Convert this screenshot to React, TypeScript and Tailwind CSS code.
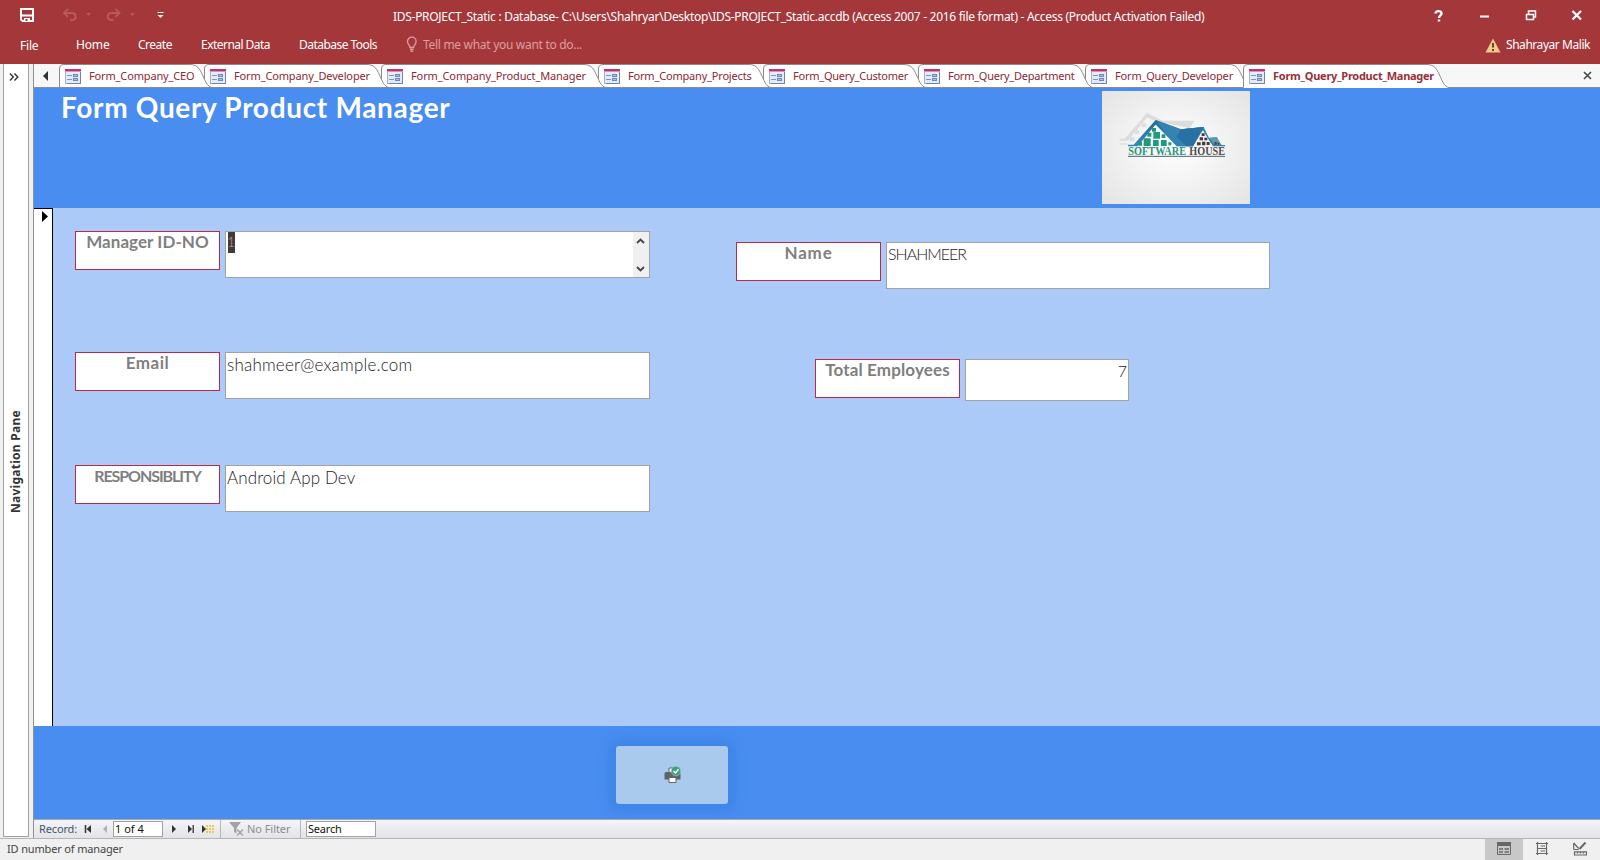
import type { ReactNode } from "react";

type Tab = { label: string; width: number; box: string; spacing: string; z: string; active?: boolean };

const tabs: Tab[] = [
  { label: "Form_Company_CEO", width: 145, box: "w-[145px]", spacing: "tracking-[-0.147px]", z: "z-[8]" },
  { label: "Form_Company_Developer", width: 177, box: "w-[177px]", spacing: "tracking-[-0.137px]", z: "z-[7]" },
  { label: "Form_Company_Product_Manager", width: 217, box: "w-[217px]", spacing: "tracking-[-0.113px]", z: "z-[6]" },
  { label: "Form_Company_Projects", width: 165, box: "w-[165px]", spacing: "tracking-[-0.185px]", z: "z-[5]" },
  { label: "Form_Query_Customer", width: 155, box: "w-[155px]", spacing: "tracking-[-0.231px]", z: "z-[4]" },
  { label: "Form_Query_Department", width: 167, box: "w-[167px]", spacing: "tracking-[-0.245px]", z: "z-[3]" },
  { label: "Form_Query_Developer", width: 158, box: "w-[158px]", spacing: "tracking-[-0.176px]", z: "z-[2]" },
  { label: "Form_Query_Product_Manager", width: 198, box: "w-[198px]", spacing: "tracking-[-0.263px]", z: "z-[9]", active: true },
];

function FormIcon() {
  return (
    <svg width="16" height="15" viewBox="0 0 16 15" className="shrink-0">
      <rect x="0.5" y="0.5" width="15" height="14" fill="#e3ebf8" stroke="#a3b0ca" />
      <rect x="0" y="0" width="16" height="2" fill="#b8386b" />
      <rect x="0" y="2" width="16" height="1" fill="#e08fb0" />
      <path d="M2 6.500h5M2 10.500h5" stroke="#8593b3" />
      <rect x="8.500" y="5.500" width="4" height="2" fill="#a9bfe6" stroke="#6f88bb" />
      <rect x="8.500" y="9.500" width="4" height="2" fill="#a9bfe6" stroke="#6f88bb" />
      <path d="M15.500 3v11.500H2" stroke="#6f83a6" fill="none" />
    </svg>
  );
}

function TabItem({ tab }: { tab: Tab }) {
  const w = tab.width;
  const outline = `M0.5 23.5V5Q0.5 0.5 5 0.5H${w - 14}C${w - 6} 0.5 ${w - 4} 6 ${w - 2} 10C${w + 1} 16 ${w + 3} 23 ${w + 8} 23.5`;
  return (
    <div className={`relative flex h-6 shrink-0 items-center ${tab.box} ${tab.z}`}>
      <svg className="absolute left-0 top-0" width={w + 9} height="24">
        <path d={outline + "V24H0.5Z"} fill="#fff" />
        <path d={outline} fill="none" stroke="#8c8c8c" />
        {!tab.active && <path d={`M0 23.5H${w + 9}`} stroke="#8c8c8c" />}
      </svg>
      <div className="relative flex items-center pl-[6px]">
        <FormIcon />
        <span
          className={`ml-2 whitespace-nowrap text-[11px] leading-[22px] ${tab.spacing} ${tab.active ? "font-bold text-[#98303a]" : "text-[#8e2833]"}`}
        >
          {tab.label}
        </span>
      </div>
    </div>
  );
}

function Label({ children, className }: { children: ReactNode; className: string }) {
  return (
    <div className={`h-[39px] w-[145px] shrink-0 whitespace-nowrap border border-[#ba2a48] bg-white text-center font-[Lato,sans-serif] font-bold leading-5 text-[#7f7f7f] ${className}`}>
      {children}
    </div>
  );
}

function Field({ children, className }: { children: ReactNode; className: string }) {
  return (
    <div className={`shrink-0 whitespace-nowrap border border-[#9fa3a8] bg-white px-px font-[Lato,sans-serif] font-light leading-5 text-[#222] ${className}`}>
      {children}
    </div>
  );
}

function Logo() {
  return (
    <svg width="148" height="113" viewBox="67 33 444 339" preserveAspectRatio="none">
      <defs>
        <radialGradient id="paper" cx="0.5" cy="0.5" r="0.7">
          <stop offset="0" stopColor="#fff" />
          <stop offset="0.45" stopColor="#f3f3f3" />
          <stop offset="1" stopColor="#e4e4e4" />
        </radialGradient>
        <linearGradient id="roof" x1="0" y1="0" x2="1" y2="1">
          <stop offset="0" stopColor="#1d5f90" />
          <stop offset="0.5" stopColor="#3587b9" />
          <stop offset="1" stopColor="#2f7fae" />
        </linearGradient>
      </defs>
      <rect x="67" y="33" width="444" height="339" fill="url(#paper)" />
      <path d="M120 176H135L202 99L250 122L345 122L330 145L225 122L202 112L145 182H120Z" fill="#dcdcdc" />
      <path d="M150 172h14v12h-14zM166 150h12v12h-12zM186 130h14v12h-14zM120 190h24v4h-24z" fill="#dedede" />
      <path d="M145 199H174L228 134L291 199H340L368 152L400 199H436V195H426L408 172L388 174L372 141L304 148L228 120L162 194H145Z" fill="url(#roof)" />
      <path d="M228 120L304 148L372 141L340 199H291Z" fill="#3383b5" />
      <path d="M304 148L291 170L320 199H340L372 141Z" fill="#2672a4" />
      <path d="M390 173L412 171L424 195H404Z" fill="#5b9aae" />
      <path d="M228 134L176 199H288Z" fill="#f4f8f6" />
      <path
        d="M217 144h12v11h-12zM203 158h12v12h-12zM221 156h20v20h-20zM246 163h11v11h-11zM192 175h21v23h-21zM220 180h17v18h-17zM244 180h17v18h-17zM176 186h11v11h-11zM266 187h9v9h-9z"
        fill="#1f9a80"
      />
      <path d="M370 151L346 198H398Z" fill="#efefef" />
      <path d="M366 160h9v8h-9zM360 172h10v9h-10zM374 173h9v8h-9zM352 187h11v9h-11zM367 185h10v11h-10zM381 186h9v9h-9zM405 186h6v8h-6zM414 188h5v6h-5z" fill="#4a3b3d" />
      <g transform="translate(0 224) scale(1 1.35)" className="font-['Liberation_Serif',serif] text-[27px] font-bold">
        <text x="146" y="0" textLength="173" lengthAdjust="spacingAndGlyphs" fill="#279580">
          SOFTWARE
        </text>
        <text x="329" y="0" textLength="107" lengthAdjust="spacingAndGlyphs" fill="#514a4c">
          HOUSE
        </text>
      </g>
      <path d="M145 229H436" stroke="#4d6460" strokeWidth="3" />
    </svg>
  );
}

function TitleBar() {
  return (
    <div className="flex h-8 items-center">
      <svg width="170" height="32" viewBox="0 0 170 32" fill="none" className="shrink-0">
        <path d="M21 9h12v12H22.500l-1.500-1.500z" stroke="#fff" strokeWidth="2" />
        <path d="M22 15.500h10" stroke="#fff" strokeWidth="2" />
        <path d="M24 18h6v4h-6z" fill="#fff" />
        <path d="M25.500 19h2v2h-2z" fill="#a4373a" />
        <g stroke="#b9595c" strokeWidth="2">
          <path d="M68 9l-4 4l4 4M64.500 13h7.500c5 0 5 7 0 7h-2" />
          <path d="M115.500 9l4 4l-4 4M119 13h-7.500c-5 0-5 7 0 7h2" />
        </g>
        <path d="M86 13h5l-2.500 3zM130 13h5l-2.500 3z" fill="#b9595c" />
        <path d="M157.500 12.500h6" stroke="#fff" />
        <path d="M157.500 15h6l-3 3z" fill="#fff" />
      </svg>
      <div className="ml-[223px] w-[820px] shrink-0 whitespace-nowrap pt-[2px] text-xs tracking-[-0.287px] text-white">
        IDS-PROJECT_Static : Database- C:\Users\Shahryar\Desktop\IDS-PROJECT_Static.accdb (Access 2007 - 2016 file
        format) - Access (Product Activation Failed)
      </div>
      <svg width="160" height="32" viewBox="1424 0 160 32" fill="none" className="ml-[211px] shrink-0" stroke="#fff" strokeWidth="2">
        <path d="M1435.500 13.500c0-3.200 6-3.200 6 0c0 2-2.500 1.800-2.500 4.500M1439 19.500v2" strokeWidth="2.400" />
        <path d="M1480 16.500h9" />
        <path d="M1526.500 14.500h7v5h-7z" strokeWidth="1.500" />
        <path d="M1528.500 14v-3h7v6h-2" strokeWidth="1.500" />
        <path d="M1572.500 11l8.500 8.500M1581 11l-8.500 8.500" strokeWidth="2.200" />
      </svg>
    </div>
  );
}

function Ribbon() {
  return (
    <div className="flex h-8 items-start whitespace-nowrap pl-5 pt-1 text-xs leading-[18px] text-white">
      <span className="w-14 pt-px tracking-[-0.222px]">File</span>
      <span className="w-[62px] tracking-[-0.16px]">Home</span>
      <span className="w-[63px] tracking-[-0.483px]">Create</span>
      <span className="w-[98px] tracking-[-0.538px]">External Data</span>
      <span className="w-[107px] tracking-[-0.536px]">Database Tools</span>
      <svg width="12" height="17" viewBox="0 0 12 17" fill="none" stroke="#dd9fa1" strokeWidth="1.300">
        <path d="M4 11.500C4 9 1.500 8.500 1.500 5.500a4.300 4.300 0 0 1 8.600 0C10.100 8.500 7.600 9 7.600 11.500zM4 13.500h3.600M4.500 15.300h2.600" />
      </svg>
      <span className="ml-[5px] tracking-[-0.3px] text-[#dd9fa1]">Tell me what you want to do...</span>
      <span className="ml-auto flex pr-[10px]">
        <svg width="16" height="15" viewBox="0 0 16 15" className="mr-[5px] mt-[2px]">
          <path d="M8 0.500L15.500 14.500H0.500Z" fill="#f3c88d" />
          <path d="M8 5v4.500M8 11v2" stroke="#5c4a26" strokeWidth="2" />
        </svg>
        <span className="tracking-[-0.45px]">Shahrayar Malik</span>
      </span>
    </div>
  );
}

function RecordBar() {
  return (
    <div className="flex h-[19px] items-center whitespace-nowrap border-t border-[#a5a8ac] bg-linear-to-b from-[#f5f5f7] to-[#e3e4e9] text-[11px] leading-4 text-[#44546a]">
      <span className="ml-[5px] w-[44px] tracking-[-0.145px]">Record:</span>
      <svg width="30" height="12" viewBox="0 0 30 12" className="shrink-0">
        <path d="M2.500 2v8" stroke="#333" strokeWidth="1.500" />
        <path d="M8 2v8L3.500 6z" fill="#333" />
        <path d="M24 2v8L20 6z" fill="#b0b0b0" />
      </svg>
      <span className="h-4 w-[50px] border border-[#a0a4aa] bg-white pl-px leading-[14px] text-[#111]">1 of 4</span>
      <svg width="57" height="14" viewBox="163 0 57 14" className="shrink-0">
        <path d="M172 3v8l4-4zM188 3v8l4-4zM202 3v8l4-4z" fill="#333" />
        <path d="M193.200 3v8" stroke="#333" strokeWidth="1.300" />
        <path d="M206 4h8M206 7h8M206 10h8" stroke="#ecc94b" strokeWidth="2" strokeDasharray="2 1" />
      </svg>
      <span className="h-full w-px bg-[#b4b7bd]" />
      <svg width="17" height="16" viewBox="0 0 17 16" className="ml-[7px] shrink-0">
        <path d="M1 1h12L8.500 7v5.500L6 11V7z" fill="#a3a3a5" />
        <path d="M9 8.500l6 6M15 8.500l-6 6" stroke="#a3a3a5" strokeWidth="1.500" />
      </svg>
      <span className="ml-[2px] w-[53px] tracking-[-0.053px] text-[#8c8c8c]">No Filter</span>
      <span className="h-full w-px bg-[#b4b7bd]" />
      <span className="ml-[5px] h-4 w-[70px] border border-[#a0a4aa] bg-white pl-px leading-[14px] tracking-[-0.202px] text-[#111]">
        Search
      </span>
    </div>
  );
}

function StatusBar() {
  return (
    <div className="flex h-[22px] shrink-0 items-stretch border-t border-[#b5b5b5] bg-[#f0f0f0] text-[11px] text-[#444]">
      <span className="pl-[7px] leading-[20px] tracking-[-0.155px]">ID number of manager</span>
      <div className="ml-auto flex">
        <div className="flex w-[38px] items-center justify-center bg-[#c8c8c8]">
          <svg width="14" height="13" viewBox="0 0 14 13" fill="none" stroke="#666" className="-mt-0.5">
            <path d="M0.500 0.500h13v12h-13z" />
            <path d="M0 0h14v4H0z" fill="#666" stroke="none" />
            <path d="M2 7h4M2 10h4M7.500 7h4.500M7.500 10h4.500" strokeWidth="1.500" />
          </svg>
        </div>
        <div className="flex w-[38px] items-center justify-center">
          <svg width="12" height="13" viewBox="0 0 12 13" fill="none" stroke="#666" strokeWidth="1.200" className="-mt-0.5">
            <path d="M0 1.500h12M0 11.500h12M1.500 0v13M10.500 0v13M1.500 6.500h9M4.500 4h4.500M4.500 9h4.500" />
          </svg>
        </div>
        <div className="flex w-[38px] items-center justify-center">
          <svg width="14" height="14" viewBox="0 0 14 14" fill="none" stroke="#666" strokeWidth="1.200" className="-mt-0.5">
            <path d="M0.700 1v6.500M0.700 1l5 5.500M0.700 7.500h5M1.500 9.800h12v3.200h-12zM4.500 10v1.500M7.500 10v1.500M10.500 10v1.500" />
            <path d="M12.500 0.500L6.500 7" strokeWidth="2" />
          </svg>
        </div>
        <div className="w-px" />
      </div>
    </div>
  );
}

export default function App() {
  return (
    <div className="flex h-[860px] w-[1600px] flex-col overflow-hidden bg-[#f0f0f0] font-['Noto_Sans',sans-serif]">
      <header className="h-16 shrink-0 bg-[#a4373a]">
        <TitleBar />
        <Ribbon />
      </header>

      <div className="flex min-h-0 flex-1">
        <aside className="mb-px ml-[3px] flex w-[26px] shrink-0 flex-col items-center border border-t-0 border-[#a0a0a0] bg-white">
          <svg width="10" height="8" viewBox="0 0 10 8" fill="none" stroke="#333" strokeWidth="1.400" className="mr-[4px] mt-[9px] shrink-0">
            <path d="M1 0.500l3.300 3.500L1 7.500M5.500 0.500L8.800 4L5.500 7.500" />
          </svg>
          <div className="mt-[328px] h-[104px] rotate-180 whitespace-nowrap text-xs font-bold leading-[18px] tracking-[0.268px] text-[#333] [writing-mode:vertical-rl]">
            Navigation Pane
          </div>
        </aside>

        <main className="ml-1 flex min-w-0 flex-1 flex-col border-l border-[#8f9296]">
          <div className="flex h-6 shrink-0 items-end bg-[#f7f7f7] bg-[linear-gradient(#8c8c8c,#8c8c8c)] bg-[length:100%_1px] bg-bottom bg-no-repeat">
            <svg width="25" height="24" className="shrink-0">
              <path d="M14 7v10L9 12z" fill="#333" />
            </svg>
            {tabs.map((t) => (
              <TabItem key={t.label} tab={t} />
            ))}
            <svg width="9" height="24" viewBox="0 0 9 24" fill="none" stroke="#444" strokeWidth="1.500" className="ml-auto mr-[8px] shrink-0">
              <path d="M1 8l7 7M8 8l-7 7" />
            </svg>
          </div>

          <section className="flex h-[120px] shrink-0 items-start bg-[#498df0]">
            <h1 className="ml-[27px] w-[1041px] whitespace-nowrap font-[Lato,sans-serif] text-[28px] font-bold leading-[38px] tracking-[0.680px] text-white">
              Form Query Product Manager
            </h1>
            <div className="pt-[3px]">
              <Logo />
            </div>
          </section>

          <section className="flex h-[518px] shrink-0 bg-[#accaf8]">
            <div className="w-[19px] shrink-0 border-r border-t border-black bg-white">
              <svg width="18" height="16">
                <path d="M8 2v11l6-5.500z" fill="#000" />
              </svg>
            </div>
            <div className="flex flex-col pl-[22px] pt-[23px]">
              <div className="flex h-[121px] items-start gap-[5px]">
                <Label className="text-[17px] tracking-[0.060px]">Manager ID-NO</Label>
                <div className="flex h-[47px] w-[425px] justify-between border border-[#9fa3a8] bg-white pl-[2px]">
                  <span className="h-[21px] w-[7px] bg-[#3f3a3c] text-center font-[Lato,sans-serif] text-sm font-light leading-[20px] text-[#d89a8a]">
                    <span className="block -translate-x-px">1</span>
                  </span>
                  <svg width="16" height="45" className="bg-[#f0f0f0]" fill="none" stroke="#444" strokeWidth="1.800">
                    <path d="M4 11L7.500 7.500l3.500 3.500M4 35l3.500 3.500l3.500-3.500" />
                  </svg>
                </div>
              </div>
              <div className="flex h-[113px] items-start gap-[5px]">
                <Label className="text-[17px] tracking-[0.500px]">Email</Label>
                <Field className="h-[47px] w-[425px] pt-[2px] text-[17px] tracking-[0.200px]">shahmeer@example.com</Field>
              </div>
              <div className="flex items-start gap-[5px]">
                <Label className="text-base tracking-[-1.077px]">RESPONSIBLITY</Label>
                <Field className="h-[47px] w-[425px] pt-[2px] text-[17px] tracking-[0.120px]">Android App Dev</Field>
              </div>
            </div>
            <div className="ml-[86px] flex flex-col pt-[34px]">
              <div className="flex h-[117px] items-start gap-[5px]">
                <Label className="text-[17px] tracking-[0.800px]">Name</Label>
                <Field className="h-[47px] w-[384px] pt-px text-base tracking-[-1.000px]">SHAHMEER</Field>
              </div>
              <div className="flex items-start gap-[5px] pl-[79px]">
                <Label className="text-[17px] tracking-[0.130px]">Total Employees</Label>
                <Field className="h-[42px] w-[164px] pt-px text-right text-base">7</Field>
              </div>
            </div>
          </section>

          <section className="flex min-h-0 flex-1 items-start bg-[#498df0] pl-[582px] pt-5">
            <div className="flex h-[58px] w-[112px] items-center justify-center rounded-[3px] bg-[#a9caec] shadow-[0_0_12px_7px_#3d85e7]">
              <svg width="17" height="17" viewBox="0 0 17 17" fill="none" className="mb-px">
                <path d="M5 2h7v5H5z" fill="#fff" stroke="#5f6468" />
                <path d="M0.500 7.500Q0.500 6 2 6H15Q16.500 6 16.500 7.500V13.500H0.500Z" fill="#5f6468" />
                <path d="M5 11.500h7v5H5z" fill="#fff" stroke="#5f6468" />
                <circle cx="12" cy="5" r="4.800" fill="#3f9f7d" stroke="#a9caec" strokeWidth="0.600" />
                <path d="M9.500 5l2 2l3-3.700" stroke="#fff" strokeWidth="1.400" />
              </svg>
            </div>
          </section>

          <RecordBar />
        </main>
      </div>

      <StatusBar />
    </div>
  );
}
